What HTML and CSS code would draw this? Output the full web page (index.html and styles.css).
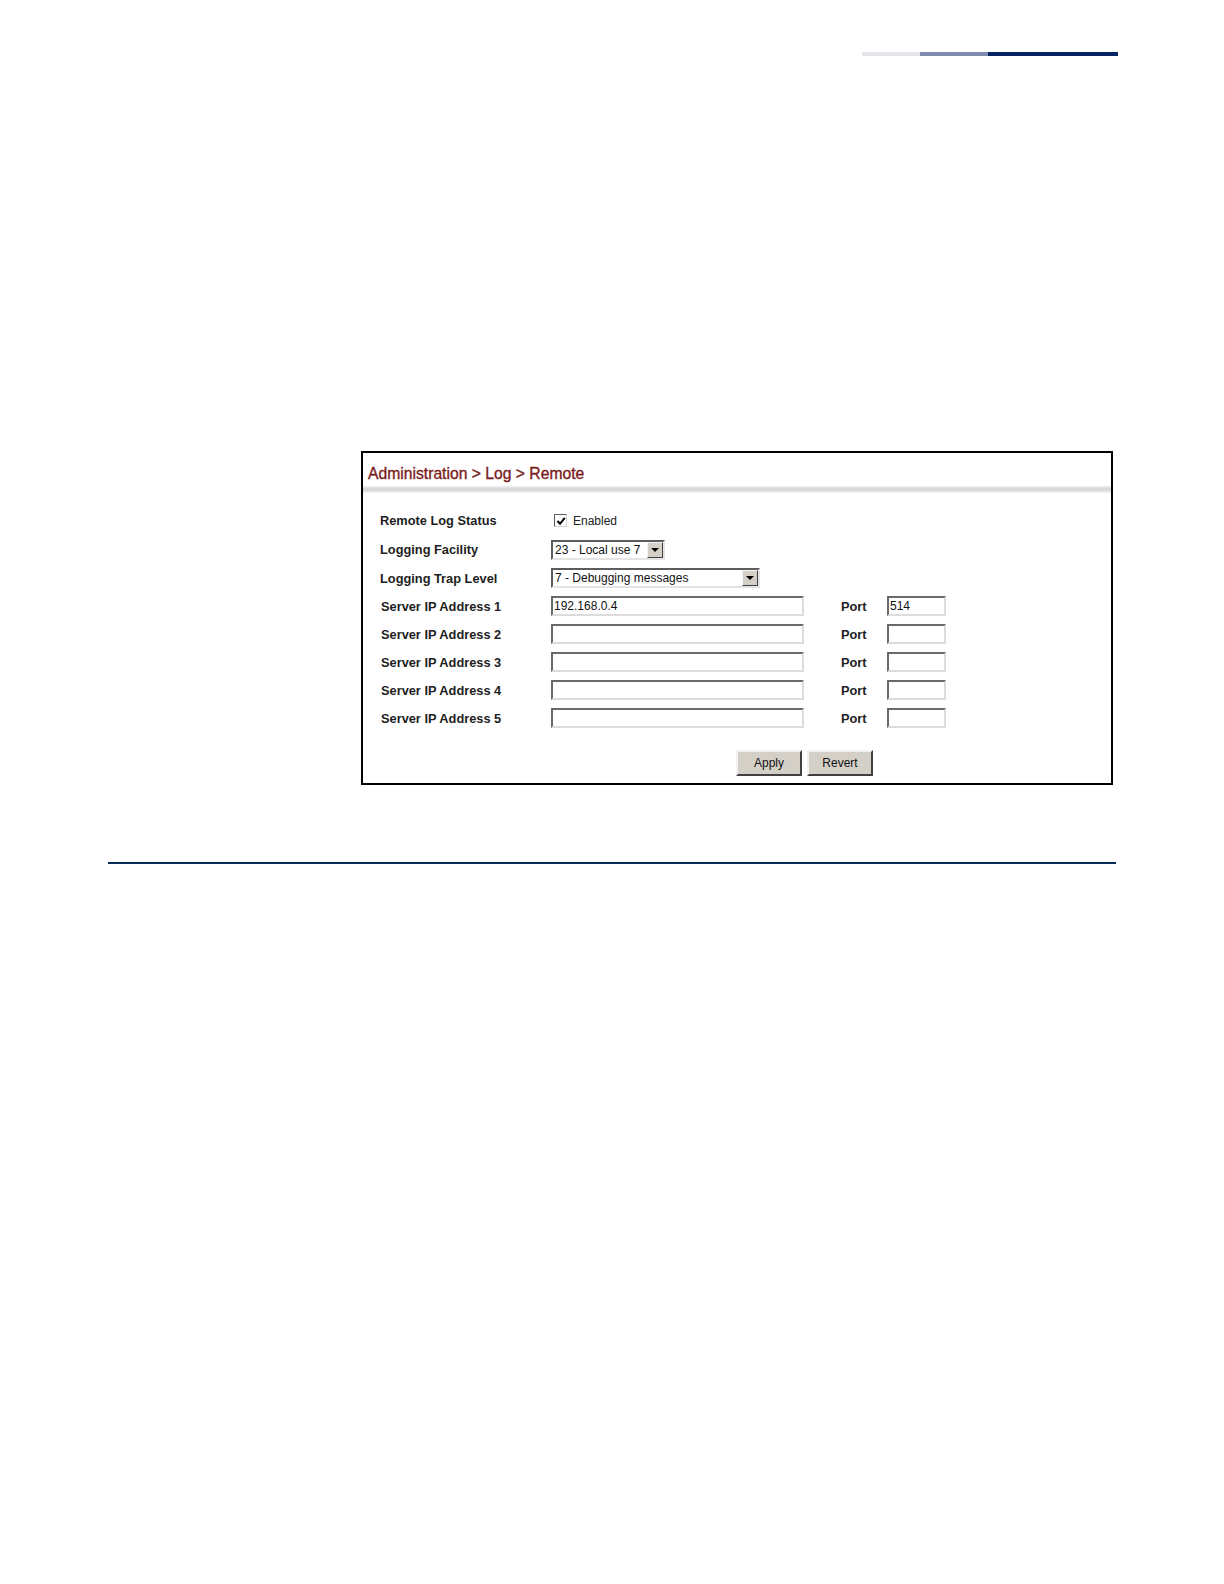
FILE: index.html
```html
<!DOCTYPE html>
<html>
<head>
<meta charset="utf-8">
<title>Administration &gt; Log &gt; Remote</title>
<link rel="stylesheet" href="styles.css">
</head>
<body>
<div class="page">
  <div class="topbar">
    <span class="seg seg-light"></span>
    <span class="seg seg-mid"></span>
    <span class="seg seg-dark"></span>
  </div>

  <div class="frame">
    <div class="title">Administration &gt; Log &gt; Remote</div>
    <div class="title-rule"></div>

    <div class="form">
      <div class="label">Remote Log Status</div>
      <div class="ctrl wide">
        <span class="checkbox"><svg width="10" height="10" viewBox="0 0 10 10"><path d="M1.5 5 L4 7.8 L8.8 1.8" fill="none" stroke="#000" stroke-width="2"/></svg></span>
        <span class="cb-text">Enabled</span>
      </div>

      <div class="label">Logging Facility</div>
      <div class="ctrl wide">
        <span class="select sel-small"><span class="sel-text">23 - Local use 7</span><span class="sel-btn"><span class="tri"></span></span></span>
      </div>

      <div class="label">Logging Trap Level</div>
      <div class="ctrl wide">
        <span class="select sel-large"><span class="sel-text">7 - Debugging messages</span><span class="sel-btn"><span class="tri"></span></span></span>
      </div>

      <div class="label lbl-ip">Server IP Address 1</div>
      <div class="ctrl"><span class="input ip">192.168.0.4</span></div>
      <div class="label">Port</div>
      <div class="ctrl"><span class="input port">514</span></div>

      <div class="label lbl-ip">Server IP Address 2</div>
      <div class="ctrl"><span class="input ip"></span></div>
      <div class="label">Port</div>
      <div class="ctrl"><span class="input port"></span></div>

      <div class="label lbl-ip">Server IP Address 3</div>
      <div class="ctrl"><span class="input ip"></span></div>
      <div class="label">Port</div>
      <div class="ctrl"><span class="input port"></span></div>

      <div class="label lbl-ip">Server IP Address 4</div>
      <div class="ctrl"><span class="input ip"></span></div>
      <div class="label">Port</div>
      <div class="ctrl"><span class="input port"></span></div>

      <div class="label lbl-ip">Server IP Address 5</div>
      <div class="ctrl"><span class="input ip"></span></div>
      <div class="label">Port</div>
      <div class="ctrl"><span class="input port"></span></div>
    </div>

    <div class="buttons">
      <span class="btn">Apply</span>
      <span class="btn">Revert</span>
    </div>
  </div>

  <div class="bottom-rule"></div>
</div>
</body>
</html>
```

FILE: styles.css
```css
html, body {
  margin: 0;
  padding: 0;
  background: #ffffff;
}

body {
  font-family: "Liberation Sans", Arial, sans-serif;
  color: #1a1a1a;
}

.page {
  width: 1224px;
  height: 1584px;
  display: flex;
  flex-direction: column;
}

.topbar {
  display: flex;
  margin-top: 52px;
  margin-left: 862px;
  height: 4px;
  width: 256px;
}

.seg { display: block; height: 100%; }
.seg-light { width: 58px; background: #e6e6ea; }
.seg-mid { width: 68px; background: #7f8caf; }
.seg-dark { flex: 1; background: #062462; }

.frame {
  margin-top: 395px;
  margin-left: 361px;
  width: 748px;
  border: 2px solid #000;
  display: flex;
  flex-direction: column;
  padding-bottom: 7px;
}

.title {
  padding: 12px 0 0 5px;
  height: 21px;
  font-size: 15.7px;
  line-height: 18px;
  color: #7a1c1c;
  font-weight: normal;
  -webkit-text-stroke: 0.35px #7a1c1c;
  white-space: nowrap;
}

.title-rule {
  height: 7px;
  background: linear-gradient(to bottom, #f0f0f0 0%, #d4d4d4 45%, #dadada 60%, #f6f6f6 100%);
}

.form {
  margin-top: 13px;
  margin-left: 17px;
  display: grid;
  grid-template-columns: 171px 290px 46px 59px;
  grid-template-rows: 29.5px 28.5px 28px;
  grid-auto-rows: 28px;
  align-items: center;
}

.label {
  font-size: 12.8px;
  font-weight: bold;
  color: #1e1e1e;
  white-space: nowrap;
}

.lbl-ip { padding-left: 1px; }

.ctrl {
  display: flex;
  align-items: center;
}

.ctrl.wide {
  grid-column: 2 / span 3;
}

.checkbox {
  margin-left: 3px;
  width: 11px;
  height: 11px;
  border-top: 1px solid #5a5a5a;
  border-left: 1px solid #5a5a5a;
  border-bottom: 1px solid #d0d0d0;
  border-right: 1px solid #d0d0d0;
  background: #fff;
  display: flex;
  align-items: center;
  justify-content: center;
}

.cb-text {
  margin-left: 6px;
  font-size: 12px;
  color: #222;
}

.select {
  display: flex;
  align-items: center;
  height: 16px;
  border-top: 2px solid #5c5c5c;
  border-left: 2px solid #5c5c5c;
  border-bottom: 2px solid #e4e4e4;
  border-right: 2px solid #e4e4e4;
  background: #fff;
  box-sizing: content-box;
}

.sel-small { width: 110px; }
.sel-large { width: 205px; }

.sel-text {
  flex: 1;
  padding-left: 2px;
  font-size: 12px;
  color: #111;
  white-space: nowrap;
}

.sel-btn {
  width: 14px;
  height: 14px;
  background: #d4d0c8;
  border-top: 1px solid #f4f4f4;
  border-left: 1px solid #f4f4f4;
  border-bottom: 1px solid #404040;
  border-right: 1px solid #404040;
  display: flex;
  align-items: center;
  justify-content: center;
}

.tri {
  width: 0;
  height: 0;
  border-left: 4px solid transparent;
  border-right: 4px solid transparent;
  border-top: 4px solid #000;
}

.input {
  display: flex;
  align-items: center;
  height: 16px;
  border-top: 2px solid #6a6a6a;
  border-left: 2px solid #6a6a6a;
  border-bottom: 2px solid #dcdcdc;
  border-right: 2px solid #dcdcdc;
  background: #fff;
  padding-left: 1px;
  font-size: 12px;
  color: #111;
  box-sizing: content-box;
}

.ip { width: 248px; }
.port { width: 54px; }

.buttons {
  display: flex;
  gap: 5px;
  margin-top: 17.5px;
  margin-left: 373px;
}

.btn {
  width: 62px;
  height: 22px;
  background: #d4d0c8;
  border-top: 2px solid #f2f2f2;
  border-left: 2px solid #f2f2f2;
  border-bottom: 2px solid #404040;
  border-right: 2px solid #404040;
  display: flex;
  align-items: center;
  justify-content: center;
  font-size: 12px;
  color: #111;
}

.bottom-rule {
  margin-top: 77px;
  margin-left: 108px;
  width: 1008px;
  height: 2px;
  background: #0b2d55;
}
```
